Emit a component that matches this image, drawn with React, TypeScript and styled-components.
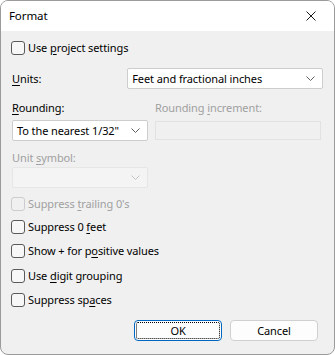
import styled, { createGlobalStyle } from "styled-components";

const GlobalStyle = createGlobalStyle`
  html, body {
    margin: 0;
    padding: 0;
    background: #ffffff;
  }
  body {
    font-family: "Noto Sans", "Segoe UI", Arial, sans-serif;
    font-size: 11px;
    letter-spacing: -0.1px;
    color: #000000;
  }
`;

const Window = styled.div`
  width: 335px;
  height: 355px;
  box-sizing: border-box;
  border: 1px solid #9b9b9b;
  border-radius: 8px;
  overflow: hidden;
  background: #f0f0f0;
  display: flex;
  flex-direction: column;
`;

const TitleBar = styled.div`
  height: 30px;
  background: #ffffff;
  display: flex;
  align-items: center;
  justify-content: space-between;
  padding: 0 0 0 8px;
  flex-shrink: 0;
`;

const TitleText = styled.span`
  font-size: 11.5px;
  line-height: 16px;
`;

const CloseButton = styled.div`
  width: 46px;
  height: 30px;
  display: flex;
  align-items: center;
  justify-content: center;
`;

const Body = styled.div`
  flex: 1;
  padding: 10px 11px 0 10px;
  display: flex;
  flex-direction: column;
`;

const CheckRow = styled.label<{ $top: number; $disabled?: boolean }>`
  display: flex;
  align-items: center;
  gap: 3px;
  height: 14px;
  margin-top: ${(p) => p.$top}px;
  color: ${(p) => (p.$disabled ? "#a0a0a0" : "#000000")};
  line-height: 14px;
`;

const Box = styled.span<{ $disabled?: boolean }>`
  width: 12px;
  height: 12px;
  border: 1px solid ${(p) => (p.$disabled ? "#cccccc" : "#5a5a5a")};
  border-radius: 3px;
  background: ${(p) => (p.$disabled ? "#f0f0f0" : "#f7f7f7")};
  flex-shrink: 0;
`;

const Key = styled.span`
  text-decoration: underline;
  text-underline-offset: 2px;
  text-decoration-thickness: 1px;
`;

const UnitsRow = styled.div`
  display: flex;
  align-items: center;
  margin-top: 13px;
  padding-left: 1px;
`;

const Label = styled.span<{ $disabled?: boolean }>`
  color: ${(p) => (p.$disabled ? "#a0a0a0" : "#000000")};
  line-height: 16px;
`;

const UnitsLabel = styled(Label)`
  width: 116px;
`;

const Select = styled.div<{ $width: number; $disabled?: boolean }>`
  width: ${(p) => p.$width}px;
  height: 21px;
  box-sizing: border-box;
  background: ${(p) => (p.$disabled ? "#f4f4f4" : "#ffffff")};
  border: 1px solid ${(p) => (p.$disabled ? "#e6e6e6" : "#cdcdcd")};
  border-radius: 2px;
  display: flex;
  align-items: center;
  justify-content: space-between;
  padding: 0 7px 0 4px;
`;

const TextBox = styled.div`
  width: 166px;
  height: 19px;
  box-sizing: border-box;
  background: #f0f0f0;
  border: 1px solid #e2e2e2;
  margin-top: 1px;
`;

const Grid = styled.div`
  display: grid;
  grid-template-columns: 136px 166px;
  column-gap: 7px;
  row-gap: 4px;
  margin-top: 11px;
  padding-left: 1px;
`;

const SubLabel = styled(Label)`
  margin-top: 9px;
  padding-left: 1px;
`;

const SymbolSelect = styled.div`
  margin-top: 1px;
  padding-left: 1px;
`;

const Buttons = styled.div`
  display: flex;
  justify-content: flex-end;
  gap: 8px;
  margin-top: 13px;
  padding-right: 5px;
`;

const Button = styled.div<{ $primary?: boolean }>`
  width: 88px;
  height: 21px;
  box-sizing: border-box;
  border: 1px solid ${(p) => (p.$primary ? "#0067c0" : "#d0d0d0")};
  border-radius: 4px;
  background: #fdfdfd;
  display: flex;
  align-items: center;
  justify-content: center;
  position: relative;
  line-height: 16px;
`;

const FocusRing = styled.span`
  position: absolute;
  inset: 1px;
  border: 1px dotted #000000;
  border-radius: 2px;
`;

const Chevron = ({ disabled }: { disabled?: boolean }) => (
  <svg width="9" height="5" viewBox="0 0 9 5">
    <path
      d="M0.5 0.5 L4.5 4.5 L8.5 0.5"
      fill="none"
      stroke={disabled ? "#c4c4c4" : "#606060"}
      strokeWidth="1"
    />
  </svg>
);

const App = () => {
  return (
    <>
      <GlobalStyle />
      <Window>
        <TitleBar>
          <TitleText>Format</TitleText>
          <CloseButton>
            <svg width="10" height="10" viewBox="0 0 10 10">
              <path d="M0.5 0.5 L9.5 9.5 M9.5 0.5 L0.5 9.5" stroke="#1a1a1a" strokeWidth="1" />
            </svg>
          </CloseButton>
        </TitleBar>
        <Body>
          <CheckRow $top={0}>
            <Box />
            <span>
              Use <Key>p</Key>roject settings
            </span>
          </CheckRow>
          <UnitsRow>
            <UnitsLabel>
              <Key>U</Key>nits:
            </UnitsLabel>
            <Select $width={197}>
              <span>Feet and fractional inches</span>
              <Chevron />
            </Select>
          </UnitsRow>
          <Grid>
            <Label>
              <Key>R</Key>ounding:
            </Label>
            <Label $disabled>
              Rounding <Key>i</Key>ncrement:
            </Label>
            <Select $width={136}>
              <span>To the nearest 1/32"</span>
              <Chevron />
            </Select>
            <TextBox />
          </Grid>
          <SubLabel $disabled>
            Unit <Key>s</Key>ymbol:
          </SubLabel>
          <SymbolSelect>
            <Select $width={136} $disabled>
              <span />
              <Chevron disabled />
            </Select>
          </SymbolSelect>
          <CheckRow $top={9} $disabled>
            <Box $disabled />
            <span>
              Suppress <Key>t</Key>railing 0's
            </span>
          </CheckRow>
          <CheckRow $top={9}>
            <Box />
            <span>
              Suppress 0 <Key>f</Key>eet
            </span>
          </CheckRow>
          <CheckRow $top={10}>
            <Box />
            <span>
              Show + for p<Key>o</Key>sitive values
            </span>
          </CheckRow>
          <CheckRow $top={11}>
            <Box />
            <span>
              Use <Key>d</Key>igit grouping
            </span>
          </CheckRow>
          <CheckRow $top={10}>
            <Box />
            <span>
              Suppress sp<Key>a</Key>ces
            </span>
          </CheckRow>
          <Buttons>
            <Button $primary>
              <FocusRing />
              OK
            </Button>
            <Button>Cancel</Button>
          </Buttons>
        </Body>
      </Window>
    </>
  );
};

export default App;
